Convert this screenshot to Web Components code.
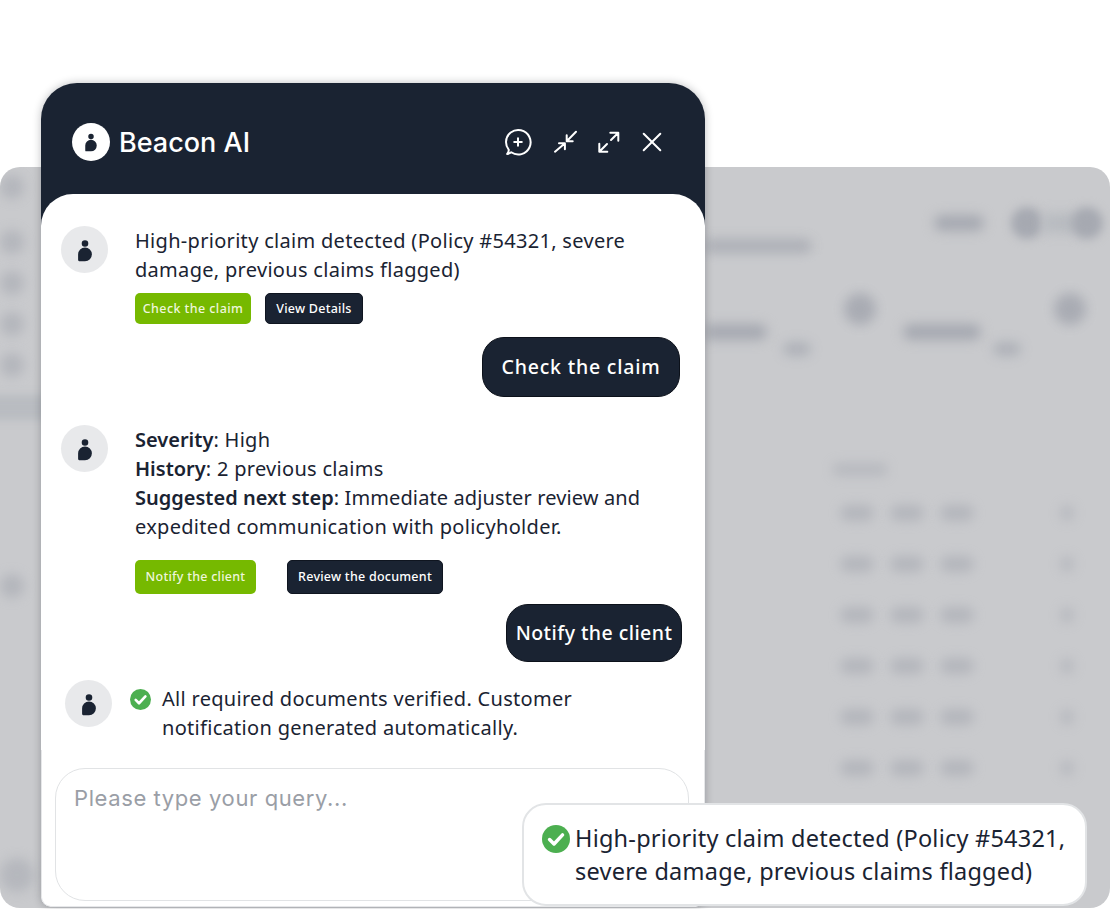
<!DOCTYPE html>
<html>
<head>
<meta charset="utf-8">
<style>
  html, body { margin: 0; padding: 0; background: #fff; }
  body { font-family: "Noto Sans", sans-serif; color: #1a2332; }
</style>
</head>
<body>
<beacon-stage>
  <blurred-dashboard></blurred-dashboard>
  <chat-panel>
    <chat-header slot="header"></chat-header>
    <bot-message>
      High-priority claim detected (Policy #54321, severe<br>damage, previous claims flagged)
      <action-row slot="actions" style="--row-top: 9px; --row-gap: 14px">
        <action-button kind="green" style="--btn-w: 116px; --btn-h: 31px; --btn-ls: .42px">Check the claim</action-button>
        <action-button style="--btn-w: 98px; --btn-h: 31px">View Details</action-button>
      </action-row>
    </bot-message>
    <user-bubble style="--bubble-w: 198px; --bubble-h: 60px; --bubble-top: 13px; --bubble-end: 25px; --bubble-ls: .8px; --bubble-shift: 1px">Check the claim</user-bubble>
    <bot-message style="--msg-top: 28px">
      <b>Severity</b>: High<br><b>History</b>: 2 previous claims<br><b>Suggested next step</b><span style="letter-spacing: .12px">: Immediate adjuster review and</span><br>expedited communication with policyholder.
      <action-row slot="actions" style="--row-top: 19px; --row-gap: 31px">
        <action-button kind="green" style="--btn-w: 121px; --btn-h: 34px">Notify the client</action-button>
        <action-button style="--btn-w: 156px; --btn-h: 34px">Review the document</action-button>
      </action-row>
    </bot-message>
    <user-bubble style="--bubble-w: 176px; --bubble-h: 58px; --bubble-top: 10px; --bubble-end: 23px">Notify the client</user-bubble>
    <bot-message checked style="--msg-top: 18px; --msg-left: 24px">
      All required documents verified. Customer<br>notification generated automatically.
    </bot-message>
    <query-box slot="footer">Please type your query...</query-box>
  </chat-panel>
  <toast-note>High-priority claim detected (Policy #54321,<br>severe damage, previous claims flagged)</toast-note>
</beacon-stage>

<script>
const PERSON_PATH = 'M12 2.200a3.300 3.300 0 1 1 0 6.600a3.300 3.300 0 0 1 0-6.600z M12 9.400a6.900 6.900 0 1 1 0 13.800h-5.800a1.100 1.100 0 0 1-1.100-1.100v-5.800a6.900 6.900 0 0 1 6.900-6.900z';

class BeaconStage extends HTMLElement {
  constructor() {
    super();
    this.attachShadow({ mode: 'open' }).innerHTML = `
      <style>
        :host { display: block; position: relative; width: 1110px; height: 909px; overflow: hidden; }
      </style>
      <slot></slot>`;
  }
}

class BlurredDashboard extends HTMLElement {
  constructor() {
    super();
    const tableRow = `
      <div class="row table">
        <i style="width:34px;height:16px"></i><i style="width:34px;height:16px"></i><i style="width:34px;height:16px"></i>
        <i class="end" style="width:14px;height:16px"></i>
      </div>`;
    this.attachShadow({ mode: 'open' }).innerHTML = `
      <style>
        :host { display: flex; position: absolute; left: 0; top: 167px; width: 1110px; height: 741px; background: #c9cacd; border-radius: 20px; overflow: hidden; }
        i { display: block; flex: none; background: #a6a9b1; border-radius: 99px; filter: blur(6px); }
        .side { width: 705px; flex: none; padding-top: 8px; box-sizing: border-box; display: flex; flex-direction: column; }
        .side i { width: 24px; height: 24px; margin-left: 0; opacity: .6; }
        .band { width: 60px; height: 25px; margin: 18px 0 0 -10px; background: #b9bcc1; filter: blur(4px); display: flex; align-items: center; }
        .main { flex: 1; display: flex; flex-direction: column; }
        .row { display: flex; align-items: center; }
        .table { gap: 16px; padding-left: 135px; margin-top: 35px; height: 16px; }
        .table i { opacity: .6; }
        .table .end { margin-left: 70px; opacity: .5; }
      </style>
      <div class="side">
        <i></i>
        <i style="margin-top:31px"></i>
        <i style="margin-top:17px"></i>
        <i style="margin-top:17px"></i>
        <i style="margin-top:17px"></i>
        <div class="band"></div>
        <i style="margin-top:154px"></i>
        <i style="margin-top:260px;width:34px;height:34px;opacity:.55"></i>
      </div>
      <div class="main">
        <div class="row" style="height:30px;margin-top:41px;padding-left:229px">
          <i style="width:50px;height:16px"></i>
          <i style="width:32px;height:32px;margin-left:27px;filter:blur(5px);opacity:1"></i>
          <i style="width:34px;height:20px;margin-left:0;background:#b8bbc0;border-radius:4px"></i>
          <i style="width:32px;height:32px;margin-left:-6px;filter:blur(5px)"></i>
        </div>
        <div class="row" style="margin-top:2px;height:12px"><i style="width:107px;height:14px;opacity:.8;border-radius:0 9px 9px 0"></i></div>
        <div class="row" style="height:30px;margin-top:42px;padding-left:139px">
          <i style="width:32px;height:32px;opacity:.9"></i>
          <i style="width:32px;height:32px;margin-left:178px;opacity:.9"></i>
        </div>
        <div class="row" style="height:14px;margin-top:1px">
          <i style="width:62px;height:16px;border-radius:0 9px 9px 0"></i>
          <i style="width:78px;height:16px;margin-left:136px"></i>
        </div>
        <div class="row" style="height:12px;margin-top:4px;padding-left:78px">
          <i style="width:28px;height:14px;opacity:.75"></i>
          <i style="width:28px;height:14px;margin-left:182px;opacity:.75"></i>
        </div>
        <div class="row" style="height:12px;margin-top:108px;padding-left:127px"><i style="width:56px;height:13px;opacity:.5"></i></div>
        <div class="row table" style="margin-top:30px">
          <i style="width:34px;height:16px"></i><i style="width:34px;height:16px"></i><i style="width:34px;height:16px"></i>
          <i class="end" style="width:14px;height:16px"></i>
        </div>
        ${tableRow.repeat(5)}
      </div>`;
  }
}

class ChatPanel extends HTMLElement {
  constructor() {
    super();
    this.attachShadow({ mode: 'open' }).innerHTML = `
      <style>
        :host { display: block; position: relative; width: 664px; height: 824px; margin: 83px 0 0 41px; background: #1a2332; border-radius: 36px 36px 10px 10px; box-shadow: 0 0 8px rgba(20, 24, 34, .28); }
        .body { height: 713px; background: #fff; border-radius: 32px 32px 10px 10px; padding-top: 32px; box-sizing: border-box; display: flex; flex-direction: column; }
        .log { display: flex; flex-direction: column; }
        .foot { flex: 1; margin-top: 8px; padding: 18px 15px 5px 13px; border: solid #e6e7e9; border-width: 0 1px 1px; border-radius: 0 0 10px 10px; display: flex; }
      </style>
      <slot name="header"></slot>
      <div class="body">
        <div class="log"><slot></slot></div>
        <div class="foot"><slot name="footer"></slot></div>
      </div>`;
  }
}

class ChatHeader extends HTMLElement {
  constructor() {
    super();
    this.attachShadow({ mode: 'open' }).innerHTML = `
      <style>
        :host { display: flex; align-items: center; height: 111px; padding: 7px 41px 0 31px; box-sizing: border-box; color: #fff; }
        .mark { width: 38px; height: 38px; border-radius: 50%; background: #fff; display: grid; place-content: center; flex: none; }
        .mark svg { width: 20px; height: 20px; display: block; }
        .name { margin-left: 9px; font: 500 27px/1 "Inter", sans-serif; flex: 1; }
        .icons { display: flex; align-items: center; }
        .icons svg { display: block; width: 24px; height: 24px; fill: none; stroke: #fff; stroke-width: 2; stroke-linecap: round; stroke-linejoin: round; }
        .icons .add { width: 28px; height: 28px; }
      </style>
      <div class="mark"><svg viewBox="0 0 24 24"><path d="${PERSON_PATH}" fill="#1a2332"/></svg></div>
      <div class="name">Beacon AI</div>
      <div class="icons">
        <svg class="add" style="margin-right:22px" viewBox="0 0 28 28"><path d="M3.200 26c1.600-.3 3-.8 4-1.700A12.300 12.300 0 1 0 2 14c0 3 1 5.600 2.700 7.700c.2 1.600-.4 3-1.500 4.300z"/><path d="M14 10.200v7.600M10.200 14h7.600"/></svg>
        <svg style="margin-right:19px" viewBox="0 0 24 24"><path d="M22 1.700L12.700 11.300M12.700 5.300v6h6"/><path d="M1 21.700L10.700 13.400M5 13.300h5.900v6"/></svg>
        <svg style="margin-right:19px" viewBox="0 0 24 24"><path d="M21.300 2.700L14 10M13.300 2.700h8v8"/><path d="M2.300 21.700L10 14M2.300 13.700v8h8"/></svg>
        <svg viewBox="0 0 24 24"><path d="M3.700 3.700L20.300 20.300M20.300 3.700L3.700 20.300"/></svg>
      </div>`;
  }
}

class BotMessage extends HTMLElement {
  constructor() {
    super();
    const checked = this.hasAttribute('checked');
    this.attachShadow({ mode: 'open' }).innerHTML = `
      <style>
        :host { display: flex; margin-top: var(--msg-top, 0); padding-left: var(--msg-left, 20px); }
        .avatar { width: 47px; height: 47px; border-radius: 50%; background: #e8e9eb; display: grid; place-content: center; flex: none; }
        .avatar svg { width: 24px; height: 24px; display: block; }
        .content { margin-left: ${checked ? '11px' : '27px'}; margin-top: ${checked ? '4px' : '0'}; }
        .text { font: 400 20px/29px "Noto Sans", sans-serif; letter-spacing: .3px; color: #1a2332; white-space: nowrap; }
        .tick { width: 21px; height: 21px; margin: 8.500px 0 0 18px; flex: none; }
        ::slotted(b) { font-weight: 600; letter-spacing: 0; }
      </style>
      <div class="avatar"><svg viewBox="0 0 24 24"><path d="${PERSON_PATH}" fill="#1a2332"/></svg></div>
      ${checked ? '<svg class="tick" viewBox="0 0 24 24"><circle cx="12" cy="12" r="12" fill="#4caf50"/><path d="M6.500 12.500l3.800 3.800l7.300-7.800" fill="none" stroke="#fff" stroke-width="3" stroke-linecap="round" stroke-linejoin="round"/></svg>' : ''}
      <div class="content">
        <div class="text"><slot></slot></div>
        <slot name="actions"></slot>
      </div>`;
  }
}

class ActionRow extends HTMLElement {
  constructor() {
    super();
    this.attachShadow({ mode: 'open' }).innerHTML = `
      <style>
        :host { display: flex; gap: var(--row-gap, 14px); margin-top: var(--row-top, 8px); }
      </style>
      <slot></slot>`;
  }
}

class ActionButton extends HTMLElement {
  constructor() {
    super();
    const green = this.getAttribute('kind') === 'green';
    this.attachShadow({ mode: 'open' }).innerHTML = `
      <style>
        :host { display: grid; place-content: center; width: var(--btn-w); height: var(--btn-h); box-sizing: border-box; padding-top: 1px; border-radius: 5px; background: ${green ? '#76b900' : '#1a2332'}; color: ${green ? '#eef6dc' : '#fff'}; font: 500 12.500px/1 "Noto Sans", sans-serif; letter-spacing: var(--btn-ls, .25px); white-space: nowrap; ${green ? '' : 'border: 1px solid #0f1520;'} }
      </style>
      <slot></slot>`;
  }
}

class UserBubble extends HTMLElement {
  constructor() {
    super();
    this.attachShadow({ mode: 'open' }).innerHTML = `
      <style>
        :host { display: grid; place-content: center; align-self: flex-end; width: var(--bubble-w); height: var(--bubble-h); margin: var(--bubble-top) var(--bubble-end) 0 0; box-sizing: border-box; padding-bottom: var(--bubble-shift, 0); background: #1a2332; border: 1px solid #0c111a; border-radius: 22px; color: #fff; font: 500 19.500px/1 "Noto Sans", sans-serif; letter-spacing: var(--bubble-ls, .45px); white-space: nowrap; }
      </style>
      <slot></slot>`;
  }
}

class QueryBox extends HTMLElement {
  constructor() {
    super();
    this.attachShadow({ mode: 'open' }).innerHTML = `
      <style>
        :host { display: block; flex: 1; height: 133px; box-sizing: border-box; border: 1.500px solid #e1e3e5; border-radius: 30px; padding: 14px 18px; color: #9a9ea6; font: 400 22px/30px "Inter", sans-serif; letter-spacing: .6px; }
      </style>
      <slot></slot>`;
  }
}

class ToastNote extends HTMLElement {
  constructor() {
    super();
    this.attachShadow({ mode: 'open' }).innerHTML = `
      <style>
        :host { display: flex; position: absolute; left: 522px; top: 803px; width: 565px; height: 103px; box-sizing: border-box; padding: 17px 0 0 18px; gap: 5px; background: #fff; border: 2.500px solid #e2e4e6; border-radius: 24px; }
        svg { width: 28px; height: 28px; flex: none; margin-top: 3px; }
        .text { font: 400 23.500px/33px "Noto Sans", sans-serif; letter-spacing: .23px; color: #1a2332; white-space: nowrap; }
      </style>
      <svg viewBox="0 0 24 24"><circle cx="12" cy="12" r="12" fill="#4caf50"/><path d="M6.500 12.500l3.800 3.800l7.300-7.800" fill="none" stroke="#fff" stroke-width="3" stroke-linecap="round" stroke-linejoin="round"/></svg>
      <div class="text"><slot></slot></div>`;
  }
}

customElements.define('beacon-stage', BeaconStage);
customElements.define('blurred-dashboard', BlurredDashboard);
customElements.define('chat-panel', ChatPanel);
customElements.define('chat-header', ChatHeader);
customElements.define('bot-message', BotMessage);
customElements.define('action-row', ActionRow);
customElements.define('action-button', ActionButton);
customElements.define('user-bubble', UserBubble);
customElements.define('query-box', QueryBox);
customElements.define('toast-note', ToastNote);
</script>
</body>
</html>
